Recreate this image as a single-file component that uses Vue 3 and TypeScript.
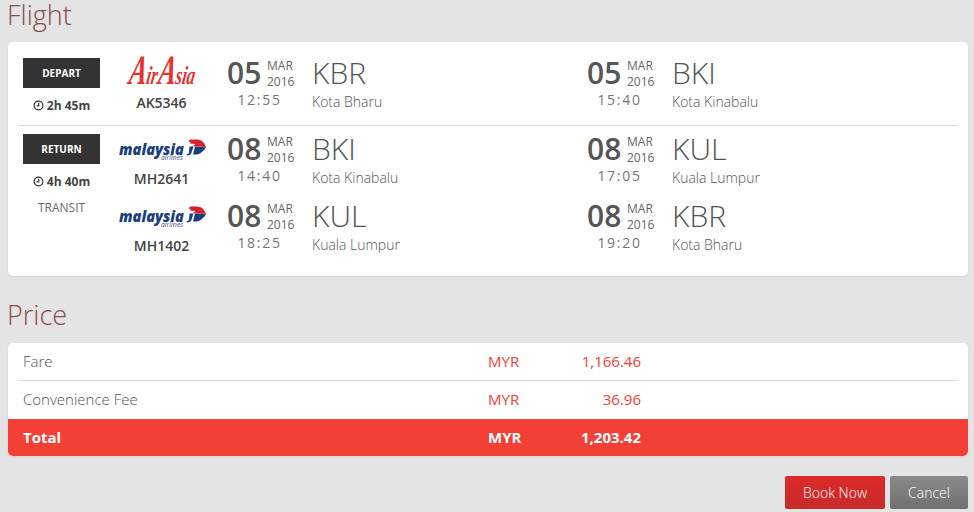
<script setup lang="ts">
interface Point { day: string; mon: string; year: string; time: string; code: string; city: string }
interface Seg { airline: 'aa' | 'mh'; no: string; from: Point; to: Point }
interface Leg { label: string; dur: string; transit: boolean; segs: Seg[] }
const p = (day: string, mon: string, time: string, code: string, city: string): Point => ({ day, mon, year: '2016', time, code, city })
const legs: Leg[] = [
  { label: 'DEPART', dur: '2h 45m', transit: false, segs: [
    { airline: 'aa', no: 'AK5346', from: p('05', 'MAR', '12:55', 'KBR', 'Kota Bharu'), to: p('05', 'MAR', '15:40', 'BKI', 'Kota Kinabalu') },
  ] },
  { label: 'RETURN', dur: '4h 40m', transit: true, segs: [
    { airline: 'mh', no: 'MH2641', from: p('08', 'MAR', '14:40', 'BKI', 'Kota Kinabalu'), to: p('08', 'MAR', '17:05', 'KUL', 'Kuala Lumpur') },
    { airline: 'mh', no: 'MH1402', from: p('08', 'MAR', '18:25', 'KUL', 'Kuala Lumpur'), to: p('08', 'MAR', '19:20', 'KBR', 'Kota Bharu') },
  ] },
]
const prices = [
  { label: 'Fare', cur: 'MYR', amount: '1,166.46' },
  { label: 'Convenience Fee', cur: 'MYR', amount: '36.96' },
]
</script>

<template>
  <main class="page">
    <h2 class="title">Flight</h2>
    <section class="card flights">
      <div v-for="leg in legs" :key="leg.label" class="leg">
        <div class="side">
          <div class="badge">{{ leg.label }}</div>
          <div class="dur">
            <svg class="clock" width="11" height="11" viewBox="0 0 11 11" fill="none" stroke="#333" stroke-width="1.2">
              <circle cx="5.5" cy="5.5" r="4.4" />
              <path d="M5.7 2.8V5.8H3.6" />
            </svg>
            {{ leg.dur }}
          </div>
          <div v-if="leg.transit" class="transit">TRANSIT</div>
        </div>
        <div class="segs">
          <div v-for="seg in leg.segs" :key="seg.no" class="seg">
            <div class="carrier">
              <svg v-if="seg.airline === 'aa'" class="logo" width="90" height="32" viewBox="0 0 90 32">
                <g transform="translate(44 26) scale(.82 1.3) skewX(-14)">
                  <text x="0" y="0" text-anchor="middle" class="aa-text"><tspan class="aa-cap">A</tspan>ir<tspan class="aa-cap" dx="1">A</tspan>sia</text>
                </g>
              </svg>
              <svg v-else class="logo" width="90" height="32" viewBox="0 0 90 32">
                <text x="2" y="21" class="mh-text" textLength="65" lengthAdjust="spacingAndGlyphs">malaysia</text>
                <text x="44" y="26" class="mh-sub" textLength="22" lengthAdjust="spacingAndGlyphs">airlines</text>
                <path d="M73 5.5H80C84.5 5.5 87.5 8.5 89 13L76 12.2 78.5 10 72.5 9.6 74 8 71.5 7.8z" fill="#d9212d" />
                <path d="M72.5 12.5H76.5L74.3 19.3C73.7 20.8 72.2 21.5 70 21.5L69.6 20C71 20 71.8 19.4 72 18.4z" fill="#1b3f7e" />
                <path d="M78 12.6 89 13.2C87.5 16 84 19.6 80 20.4H76z" fill="#1b3f7e" />
              </svg>
              <div class="flight-no">{{ seg.no }}</div>
            </div>
            <div v-for="pt in [seg.from, seg.to]" :key="pt.time" class="stop">
              <div class="when">
                <div class="date">
                  <span class="day">{{ pt.day }}</span>
                  <span class="my"><span>{{ pt.mon }}</span><span>{{ pt.year }}</span></span>
                </div>
                <div class="time">{{ pt.time }}</div>
              </div>
              <div class="where">
                <div class="code">{{ pt.code }}</div>
                <div class="city">{{ pt.city }}</div>
              </div>
            </div>
          </div>
        </div>
      </div>
    </section>

    <h2 class="title price-title">Price</h2>
    <section class="card prices">
      <div v-for="row in prices" :key="row.label" class="price-row">
        <span class="p-label">{{ row.label }}</span>
        <span class="p-cur">{{ row.cur }}</span>
        <span class="p-amt">{{ row.amount }}</span>
      </div>
      <div class="price-row total">
        <span class="p-label">Total</span>
        <span class="p-cur">MYR</span>
        <span class="p-amt">1,203.42</span>
      </div>
    </section>

    <div class="actions">
      <button class="btn book">Book Now</button>
      <button class="btn cancel">Cancel</button>
    </div>
  </main>
</template>

<style>
html, body { margin: 0; background: #e4e4e4; }
</style>

<style scoped>
.page {
  width: 974px;
  height: 512px;
  overflow: hidden;
  box-sizing: border-box;
  padding: 0 6px 0 8px;
  font-family: "Open Sans", "Liberation Sans", sans-serif;
  color: #555;
}
.title {
  margin: 0 0 0 -1px;
  height: 42px;
  font-size: 27px;
  font-weight: 300;
  line-height: 29px;
  color: #8b4a4c;
}
.card {
  background: #fff;
  border-radius: 5px;
  box-shadow: 0 1px 2px rgba(0, 0, 0, 0.08);
}
.flights { height: 234px; box-sizing: border-box; padding: 0 10px; }
.leg { display: flex; }
.leg:first-child { height: 84px; border-bottom: 1px solid #ddd; box-sizing: border-box; padding-top: 16px; }
.leg:last-child { padding-top: 8px; }
.side { width: 77px; margin-left: 5px; text-align: center; flex: none; }
.badge {
  height: 30px;
  line-height: 30px;
  background: #333;
  color: #fff;
  font-size: 10px;
  font-weight: 700;
}
.dur {
  margin-top: 9px;
  font-size: 12px;
  font-weight: 700;
  line-height: 18px;
  color: #444;
}
.clock { vertical-align: -1px; }
.transit { margin-top: 8px; font-size: 12px; line-height: 18px; font-weight: 400; color: #6a6a6a; }
.segs { flex: 1; display: flex; flex-direction: column; gap: 5px; }
.seg { display: flex; height: 62px; }
.carrier { width: 107px; margin-left: 8px; margin-right: 12px; text-align: center; flex: none; }
.logo { display: block; margin: 0 auto; overflow: visible; }
.flight-no { margin-top: 3px; font-size: 14px; font-weight: 600; line-height: 20px; color: #444; }
.aa-text {
  font-family: "Liberation Serif", serif;
  font-style: italic;
  font-weight: 700;
  font-size: 20px;
  fill: #e8322e;
}
.aa-cap { font-size: 32px; font-weight: 700; }
.mh-text {
  font-family: "Open Sans", sans-serif;
  font-style: italic;
  font-weight: 800;
  font-size: 15px;
  fill: #1b3f7e;
}
.mh-sub {
  font-family: "Open Sans", sans-serif;
  font-style: italic;
  font-size: 6.5px;
  fill: #36507f;
}
.stop { display: flex; width: 360px; }
.when { width: 85px; flex: none; }
.date { display: flex; align-items: center; height: 32px; }
.day { width: 40px; font-size: 30px; font-weight: 600; line-height: 30px; height: 32px; color: #555; }
.my { display: flex; flex-direction: column; font-size: 12px; line-height: 16px; color: #666; }
.time { width: 65px; text-align: center; font-size: 14px; line-height: 20px; letter-spacing: 1.7px; color: #757575; }
.code { font-size: 30px; font-weight: 300; line-height: 30px; color: #555; }
.city { margin-top: 4px; font-size: 14px; font-weight: 300; line-height: 20px; color: #555; }
.price-title { margin-top: 24px; height: 43px; line-height: 30px; }
.prices { overflow: hidden; }
.price-row {
  position: relative;
  display: flex;
  box-sizing: border-box;
  height: 38px;
  padding-bottom: 2px;
  align-items: center;
  font-size: 15px;
  line-height: 20px;
}
.price-row + .price-row:not(.total)::before {
  content: "";
  position: absolute;
  left: 10px;
  right: 10px;
  top: -1px;
  border-top: 1px solid #ddd;
}
.p-label { width: 465px; margin-left: 15px; font-weight: 300; color: #555; }
.p-cur { width: 70px; color: #f24037; }
.p-amt { width: 83px; text-align: right; color: #f24037; }
.total { background: #f24037; height: 37px; font-weight: 700; }
.total span { color: #fff; font-weight: 700; }
.actions { display: flex; justify-content: flex-end; gap: 5px; margin-top: 20px; }
.btn {
  height: 33px;
  border: 0;
  border-radius: 2px;
  color: #fff;
  font-family: inherit;
  font-size: 14px;
  font-weight: 300;
  padding: 0;
}
.book { width: 100px; background: linear-gradient(#dc2a2a, #c92a2a); }
.cancel { width: 78px; background: linear-gradient(#8a8a8a, #707070); }
</style>
